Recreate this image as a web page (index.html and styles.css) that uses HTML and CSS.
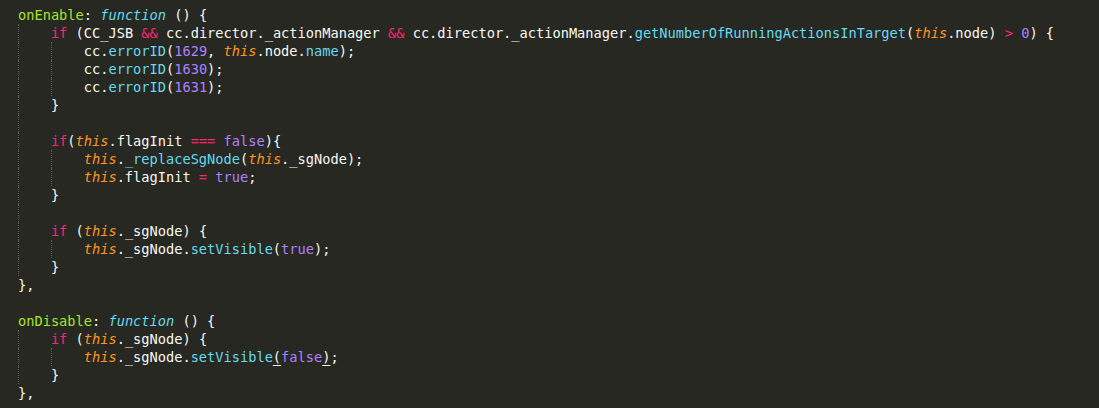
FILE: index.html
```html
<!DOCTYPE html>
<html>
<head>
<meta charset="utf-8">
<link rel="stylesheet" href="styles.css">
</head>
<body>
<div class="editor">
<div class="ln"><span class="fn">onEnable</span>: <span class="st">function</span> () {</div>
<div class="ln"><span class="g"></span><span class="kw">if</span> (CC_JSB <span class="kw">&amp;&amp;</span> cc.director._actionManager <span class="kw">&amp;&amp;</span> cc.director._actionManager.<span class="sp">getNumberOfRunningActionsInTarget</span>(<span class="th">this</span>.node) <span class="kw">&gt;</span> <span class="nu">0</span>) {</div>
<div class="ln"><span class="g"></span><span class="g"></span>cc.<span class="sp">errorID</span>(<span class="nu">1629</span>, <span class="th">this</span>.node.<span class="sp">name</span>);</div>
<div class="ln"><span class="g"></span><span class="g"></span>cc.<span class="sp">errorID</span>(<span class="nu">1630</span>);</div>
<div class="ln"><span class="g"></span><span class="g"></span>cc.<span class="sp">errorID</span>(<span class="nu">1631</span>);</div>
<div class="ln"><span class="g"></span>}</div>
<div class="ln"><span class="g"></span></div>
<div class="ln"><span class="g"></span><span class="kw">if</span>(<span class="th">this</span>.flagInit <span class="kw">===</span> <span class="nu">false</span>){</div>
<div class="ln"><span class="g"></span><span class="g"></span><span class="th">this</span>.<span class="sp">_replaceSgNode</span>(<span class="th">this</span>._sgNode);</div>
<div class="ln"><span class="g"></span><span class="g"></span><span class="th">this</span>.flagInit <span class="kw">=</span> <span class="nu">true</span>;</div>
<div class="ln"><span class="g"></span>}</div>
<div class="ln"><span class="g"></span></div>
<div class="ln"><span class="g"></span><span class="kw">if</span> (<span class="th">this</span>._sgNode) {</div>
<div class="ln"><span class="g"></span><span class="g"></span><span class="th">this</span>._sgNode.<span class="sp">setVisible</span>(<span class="nu">true</span>);</div>
<div class="ln"><span class="g"></span>}</div>
<div class="ln">},</div>
<div class="ln"></div>
<div class="ln"><span class="fn">onDisable</span>: <span class="st">function</span> () {</div>
<div class="ln"><span class="g"></span><span class="kw">if</span> (<span class="th">this</span>._sgNode) {</div>
<div class="ln"><span class="g"></span><span class="g"></span><span class="th">this</span>._sgNode.<span class="sp">setVisible</span><span class="br">(</span><span class="nu">false</span><span class="br">)</span>;</div>
<div class="ln"><span class="g"></span>}</div>
<div class="ln">},</div>
</div>
</body>
</html>
```
FILE: styles.css
```css
html, body {
  margin: 0;
  padding: 0;
  background: #272822;
  width: 1099px;
  height: 408px;
  overflow: hidden;
}
.editor {
  padding: 6px 0 0 18px;
  font-family: "DejaVu Sans Mono", "Liberation Mono", monospace;
  font-size: 13.67px;
  color: #f8f8f2;
}
.ln {
  height: 18px;
  line-height: 18px;
  white-space: pre;
}
.g {
  display: inline-block;
  box-sizing: border-box;
  width: 4ch;
  height: 18px;
  vertical-align: top;
  border-left: 1px dotted #5c5d55;
}
.fn { color: #a6e22e; }
.st { color: #66d9ef; font-style: italic; }
.kw { color: #f92672; }
.sp { color: #66d9ef; }
.nu { color: #ae81ff; }
.th { color: #fd971f; font-style: italic; }
.br {
  text-decoration: underline;
  text-decoration-color: #f8f8f2;
  text-underline-offset: 3px;
}
```
